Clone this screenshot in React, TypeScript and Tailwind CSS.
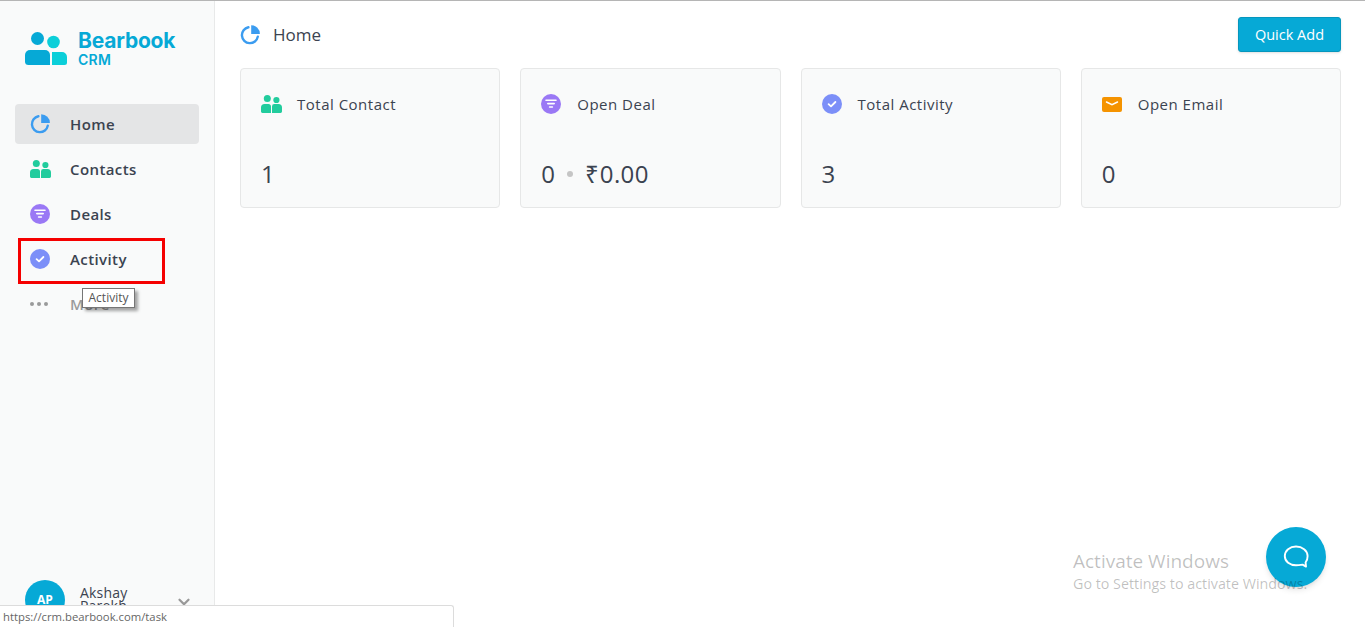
import { ChevronDown } from "lucide-react";

function PieIcon({ className = "w-5 h-5" }: { className?: string }) {
  return (
    <svg viewBox="0 0 20 20" className={className} fill="none">
      <path d="M8.4 2.3A8 8 0 1 0 17.8 11.6" stroke="#3b9cf0" strokeWidth="2.4" strokeLinecap="round" />
      <path d="M11.2 0.2V8.9H19.9A8.7 8.7 0 0 0 11.2 0.2Z" fill="#3b9cf0" />
    </svg>
  );
}

function PeopleIcon() {
  return (
    <svg viewBox="0 0 21 18" className="w-[21px] h-[18px]" fill="#22cc9d">
      <circle cx="6.3" cy="3.6" r="3.5" />
      <circle cx="15.4" cy="5" r="3.1" />
      <path d="M0 16.6V12.6A3.6 3.6 0 0 1 3.6 9H7.4A2.6 2.6 0 0 1 10 11.6V18H1.4A1.4 1.4 0 0 1 0 16.6Z" />
      <path d="M11 18V11.4A2.4 2.4 0 0 1 13.4 9H17.4A3.6 3.6 0 0 1 21 12.6V16.6A1.4 1.4 0 0 1 19.6 18Z" />
    </svg>
  );
}

function DealIcon() {
  return (
    <svg viewBox="0 0 20 20" className="w-5 h-5">
      <circle cx="10" cy="10" r="10" fill="#9a78f5" />
      <path d="M5 6.2H15M6.8 9.6H13.2M8.6 13H11.4" stroke="#fff" strokeWidth="1.6" strokeLinecap="round" />
    </svg>
  );
}

function CheckIcon() {
  return (
    <svg viewBox="0 0 20 20" className="w-5 h-5">
      <circle cx="10" cy="10" r="10" fill="#7c8ff8" />
      <path d="M6.6 10.2L9 12.4L13.4 8" stroke="#fff" strokeWidth="1.8" fill="none" strokeLinecap="round" strokeLinejoin="round" />
    </svg>
  );
}

function MailIcon() {
  return (
    <svg viewBox="0 0 20 15" className="w-5 h-[15px]">
      <rect width="20" height="15" rx="2" fill="#f59300" />
      <path d="M4.5 5L10 7.6L15.5 5" stroke="#fff" strokeWidth="1.5" fill="none" strokeLinecap="round" />
    </svg>
  );
}

function Logo() {
  return (
    <svg viewBox="0 0 42 33" className="w-[42px] h-[33px]">
      <circle cx="12.5" cy="6.5" r="6.5" fill="#06a9d6" />
      <circle cx="28.5" cy="10" r="6.3" fill="#0ccfd9" />
      <path d="M0 29.5V23A5 5 0 0 1 5 18H20A5 5 0 0 1 25 23V33H3.5A3.5 3.5 0 0 1 0 29.5Z" fill="#06a9d6" />
      <path d="M27 33V20H37A5 5 0 0 1 42 25V30.5A2.5 2.5 0 0 1 39.5 33Z" fill="#0ccfd9" />
    </svg>
  );
}

const navItems = [
  { label: "Home", icon: <PieIcon />, active: true },
  { label: "Contacts", icon: <PeopleIcon /> },
  { label: "Deals", icon: <DealIcon /> },
  { label: "Activity", icon: <CheckIcon /> },
];

const cards = [
  { title: "Total Contact", icon: <PeopleIcon />, value: "1" },
  { title: "Open Deal", icon: <DealIcon />, value: "0", amount: "₹0.00" },
  { title: "Total Activity", icon: <CheckIcon />, value: "3" },
  { title: "Open Email", icon: <MailIcon />, value: "0" },
];

export default function App() {
  return (
    <div className="relative h-screen overflow-hidden border-t border-[#b5b5b5] bg-white font-['Open_Sans',sans-serif] text-[#3b4350] flex">
      <aside className="w-[215px] shrink-0 h-full flex flex-col bg-[#f9fafa] border-r border-[#e8e9e9]">
        <div className="flex items-start pl-[25px] pt-[28px] gap-[11px]">
          <div className="pt-[3px]">
            <Logo />
          </div>
          <div className="flex flex-col text-[#06a9d6] font-['Inter',sans-serif] font-semibold">
            <span className="text-[21px] leading-[23px] font-bold tracking-[-0.2px]">Bearbook</span>
            <span className="text-[14px] leading-[15px] tracking-[0.3px]">CRM</span>
          </div>
        </div>

        <nav className="mt-[37px] px-[15px] flex flex-col gap-[5px]">
          {navItems.map((item) => (
            <div
              key={item.label}
              className={`h-10 flex items-center rounded-[4px] ${item.active ? "bg-[#e4e5e6]" : ""}`}
            >
              <span className="w-[55px] flex pl-[15px]">{item.icon}</span>
              <span className="text-[15px] font-semibold tracking-[0.4px]">{item.label}</span>
            </div>
          ))}
          <div className="h-10 flex items-center">
            <span className="w-[55px] flex pl-[15px] gap-[3px]">
              <i className="w-1 h-1 rounded-full bg-[#9a9a9a]" />
              <i className="w-1 h-1 rounded-full bg-[#9a9a9a]" />
              <i className="w-1 h-1 rounded-full bg-[#9a9a9a]" />
            </span>
            <span className="text-[15px] font-semibold tracking-[0.4px] text-[#9a9a9a]">More</span>
          </div>
        </nav>

        <div className="mt-auto flex items-center pl-[25px] pb-[7px]">
          <div className="w-10 h-10 rounded-full bg-[#06a9d6] text-white text-[12px] font-bold flex items-center justify-center">
            AP
          </div>
          <div className="ml-[15px] w-[70px] pb-[2px] text-[14px] leading-[13px] font-medium tracking-[0.2px]">Akshay Parekh</div>
          <ChevronDown className="ml-[25px] mt-[3px] w-[18px] h-[18px] text-[#999]" strokeWidth={3} />
        </div>
      </aside>

      <main className="flex-1 pl-[25px] pr-[24px]">
        <header className="h-[67px] flex items-center justify-between">
          <div className="flex items-center gap-[13px] pt-[1px]">
            <PieIcon />
            <span className="text-[17px]">Home</span>
          </div>
          <button className="w-[103px] h-[35px] rounded-[3px] bg-[#06a9d6] border border-[#0596bd] shadow-sm text-white text-[14.5px] pt-[1px] font-medium">
            Quick Add
          </button>
        </header>
        <div className="grid grid-cols-4 gap-5">
          {cards.map((card) => (
            <div key={card.title} className="h-[140px] rounded-[4px] border border-[#e6e7e7] bg-[#f9fafa] pl-5 pt-[25px]">
              <div className="h-5 flex items-center">
                <span className="w-[36px] flex">{card.icon}</span>
                <span className="text-[15px] font-medium tracking-[0.5px]">{card.title}</span>
              </div>
              <div className="mt-[44px] flex items-center text-[24px] leading-8 tracking-[0.4px]">
                <span>{card.value}</span>
                {card.amount && (
                  <>
                    <i className="mx-[12px] w-[6px] h-[6px] rounded-full bg-[#c5c5c5]" />
                    <span>{card.amount}</span>
                  </>
                )}
              </div>
            </div>
          ))}
        </div>
      </main>

      {/* red annotation box, tooltip, browser status bar and watermark sit over the page */}
      <div className="absolute left-[18px] top-[237px] w-[147px] h-[46px] border-[3px] border-[#f50000]" />
      <div className="absolute left-[82px] top-[287px] w-[53px] h-5 bg-white border border-[#767676] shadow-[3px_3px_3px_rgba(0,0,0,0.35)] text-[12px] leading-[18px] text-center text-[#555]">
        Activity
      </div>
      <div className="absolute left-[1266px] top-[526px] w-[60px] h-[60px] rounded-full bg-[#06a9d6] shadow-md flex items-center justify-center">
        <svg viewBox="0 0 26 26" className="w-[26px] h-[26px]" fill="none">
          <path d="M13 2.5C6.9 2.5 1.8 6.4 1.8 12S6.9 21.2 13 21.2C15.3 21.2 17.5 20.9 19.6 20.6L23 22.6L22.6 18.4C24.2 16.8 24.6 14.4 24.6 12C24.6 6.4 19.1 2.5 13 2.5Z" stroke="#fff" strokeWidth="1.9" strokeLinejoin="round" />
        </svg>
      </div>
      <div className="absolute left-[1073px] top-[548px] text-black/25 pointer-events-none">
        <div className="text-[19px] leading-[25px]">Activate Windows</div>
        <div className="text-[14.3px] leading-[20px]">Go to Settings to activate Windows.</div>
      </div>
      <div className="absolute left-0 bottom-0 w-[454px] h-[22px] bg-white border-t border-r border-[#dcdcdc] rounded-tr-[3px] pl-[3px] text-[11.3px] leading-[22px] text-[#666]">
        https://crm.bearbook.com/task
      </div>
    </div>
  );
}
